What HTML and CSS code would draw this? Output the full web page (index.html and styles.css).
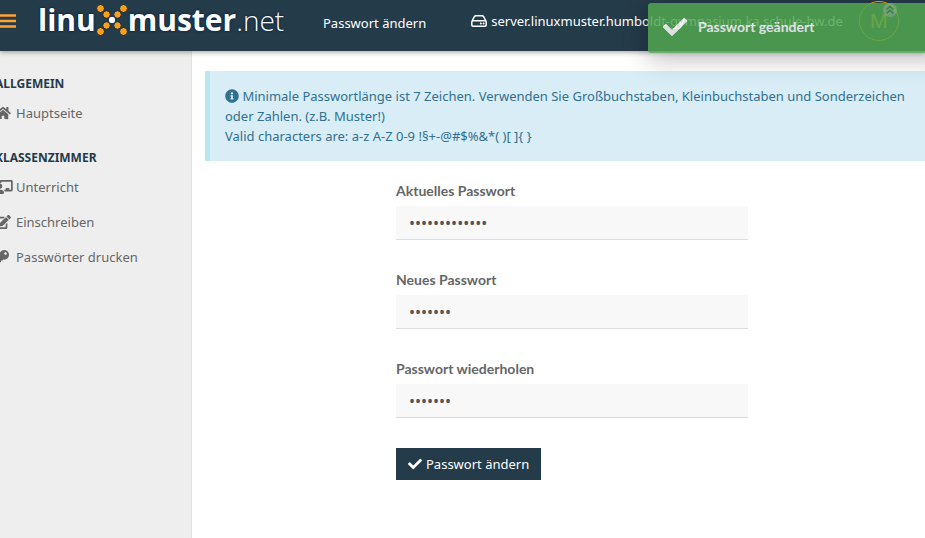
FILE: index.html
```
<!DOCTYPE html>
<html lang="de">
<head>
<meta charset="utf-8">
<title>Passwort ändern</title>
<link rel="stylesheet" href="styles.css">
</head>
<body>
<header class="topbar">
  <button class="menu-toggle" type="button" aria-label="Menü">
    <svg class="bars" viewBox="0 0 16 14"><path d="M0 1.500h16M0 7h16M0 12.500h16" stroke="currentColor" stroke-width="2.500"/></svg>
  </button>
  <a class="brand" href="#">
    <span class="brand-bold">linu</span>
    <svg class="brand-x" viewBox="0 0 32 32">
      <g stroke="#0d2440" stroke-width="1"><g fill="#f9a01b"><circle cx="4.500" cy="4.500" r="4"/><circle cx="10.500" cy="10.500" r="3.800"/><circle cx="21.500" cy="10.500" r="3.800"/><circle cx="27.500" cy="4.500" r="4"/><circle cx="10.500" cy="21.500" r="3.800"/><circle cx="4.500" cy="27.500" r="4"/><circle cx="21.500" cy="21.500" r="3.800"/><circle cx="27.500" cy="27.500" r="4"/></g><circle cx="16" cy="16" r="3.800" fill="#fff"/></g>
    </svg>
    <span class="brand-bold">muster</span><span class="brand-light">.net</span>
  </a>
  <span class="page-name">Passwort ändern</span>
  <span class="server">
    <svg class="hdd" viewBox="0 0 16 12"><path d="M.8 6.500 3.500 1.500Q4 .8 4.800.8h6.400q.8 0 1.300.7l2.700 5M2 5.800h12q1.200 0 1.200 1.200v3q0 1.200-1.200 1.200H2Q.8 11.200.8 10V7Q.8 5.800 2 5.800z" fill="none" stroke="currentColor" stroke-width="1.500"/><circle cx="9.800" cy="8.500" r="1" fill="currentColor"/><circle cx="12.600" cy="8.500" r="1" fill="currentColor"/></svg>
    server.linuxmuster.humboldt-gymnasium.ka.schule-bw.de
  </span>
  <button class="avatar" type="button">M</button>
</header>

<div class="toast" role="status">
  <svg class="toast-check" viewBox="0 0 512 512"><path fill="currentColor" d="M173.898 439.404l-166.400-166.400c-9.997-9.997-9.997-26.206 0-36.204l36.203-36.204c9.997-9.998 26.207-9.998 36.204 0L192 312.690 432.095 72.596c9.997-9.997 26.207-9.997 36.204 0l36.203 36.204c9.997 9.997 9.997 26.206 0 36.204l-294.400 294.401c-9.998 9.997-26.207 9.997-36.204-.001z"/></svg>
  <span>Passwort geändert</span>
  <button class="toast-up" type="button" aria-label="Schließen"><svg viewBox="0 0 14 14"><circle cx="7" cy="7" r="7" fill="#7cb37c"/><path d="M3.500 6.500 7 3.300l3.500 3.200M3.500 10.500 7 7.300l3.500 3.200" fill="none" stroke="#468c48" stroke-width="1.600"/></svg></button>
</div>

<div class="layout">
  <nav class="sidebar">
    <div class="nav">
      <h2>ALLGEMEIN</h2>
      <a href="#"><svg class="wide" viewBox="0 0 576 512"><path d="M280.370 148.260L96 300.110V464a16 16 0 0 0 16 16l112.060-.29a16 16 0 0 0 15.920-16V368a16 16 0 0 1 16-16h64a16 16 0 0 1 16 16v95.640a16 16 0 0 0 16 16.050L464 480a16 16 0 0 0 16-16V300L295.670 148.260a12.190 12.190 0 0 0-15.300 0zM571.600 251.470L488 182.560V44.050a12 12 0 0 0-12-12h-56a12 12 0 0 0-12 12v72.610L318.470 43a48 48 0 0 0-61 0L4.340 251.470a12 12 0 0 0-1.600 16.900l25.500 31A12 12 0 0 0 45.150 301l235.220-193.740a12.190 12.190 0 0 1 15.300 0L530.900 301a12 12 0 0 0 16.900-1.600l25.500-31a12 12 0 0 0-1.700-16.930z"/></svg>Hauptseite</a>
      <h2>KLASSENZIMMER</h2>
      <a href="#"><svg class="wider" viewBox="0 0 640 512"><path d="M208 352c-2.390 0-4.780.35-7.060 1.090C187.980 357.300 174.350 360 160 360c-14.350 0-27.980-2.700-40.950-6.910-2.280-.74-4.660-1.090-7.050-1.090C49.940 352-.33 402.480 0 464.620.14 490.880 21.730 512 48 512h224c26.270 0 47.860-21.120 48-47.380.33-62.140-49.940-112.620-112-112.620zm-48-32c53.020 0 96-42.980 96-96s-42.980-96-96-96-96 42.980-96 96 42.980 96 96 96zM592 0H208c-26.470 0-48 22.250-48 49.590V96c23.420 0 45.100 6.780 64 17.800V64h352v288h-64v-64H384v64h-76.240c19.100 16.690 33.120 38.730 39.690 64H592c26.470 0 48-22.250 48-49.590V49.590C640 22.250 618.470 0 592 0z"/></svg>Unterricht</a>
      <a href="#"><svg class="wide" viewBox="0 0 576 512"><path d="M402.600 83.200l90.200 90.200c3.800 3.800 3.800 10 0 13.800L274.400 405.600l-92.800 10.300c-12.400 1.400-22.900-9.100-21.500-21.500l10.300-92.800L388.800 83.200c3.800-3.800 10-3.800 13.800 0zm162-22.900l-48.800-48.800c-15.200-15.200-39.900-15.200-55.200 0l-35.400 35.400c-3.800 3.800-3.800 10 0 13.800l90.200 90.200c3.800 3.800 10 3.800 13.800 0l35.400-35.400c15.200-15.300 15.200-40 0-55.200zM384 346.200V448H64V128h229.800c3.200 0 6.200-1.300 8.500-3.500l40-40c7.600-7.600 2.200-20.500-8.500-20.500H48C21.500 64 0 85.500 0 112v352c0 26.500 21.500 48 48 48h352c26.500 0 48-21.500 48-48V306.200c0-10.700-12.900-16-20.500-8.500l-40 40c-2.200 2.300-3.500 5.300-3.500 8.500z"/></svg>Einschreiben</a>
      <a href="#"><svg viewBox="0 0 512 512"><path d="M512 176.001C512 273.203 433.202 352 336 352c-11.220 0-22.190-1.062-32.827-3.069l-24.012 27.014A23.999 23.999 0 0 1 261.223 384H224v40c0 13.255-10.745 24-24 24h-40v40c0 13.255-10.745 24-24 24H24c-13.255 0-24-10.745-24-24v-78.059c0-6.365 2.529-12.470 7.029-16.971l161.802-161.802C163.108 213.814 160 195.271 160 176 160 78.798 238.797.001 335.999 0 433.488-.001 512 78.511 512 176.001zM336 128c0 26.510 21.490 48 48 48s48-21.490 48-48-21.490-48-48-48-48 21.490-48 48z"/></svg>Passwörter drucken</a>
    </div>
  </nav>
  <main class="main">
    <div class="content">
      <div class="notice">
        <svg class="info" viewBox="0 0 512 512"><path fill="currentColor" d="M256 8C119.043 8 8 119.083 8 256c0 136.997 111.043 248 248 248s248-111.003 248-248C504 119.083 392.957 8 256 8zm0 110c23.196 0 42 18.804 42 42s-18.804 42-42 42-42-18.804-42-42 18.804-42 42-42zm56 254c0 6.627-5.373 12-12 12h-88c-6.627 0-12-5.373-12-12v-24c0-6.627 5.373-12 12-12h12v-64h-12c-6.627 0-12-5.373-12-12v-24c0-6.627 5.373-12 12-12h64c6.627 0 12 5.373 12 12v100h12c6.627 0 12 5.373 12 12v24z"/></svg>
        Minimale Passwortlänge ist 7 Zeichen. Verwenden Sie Großbuchstaben, Kleinbuchstaben und Sonderzeichen oder Zahlen. (z.B. Muster!)<br>
        Valid characters are: a-z A-Z 0-9 !§+-@#$%&amp;*( )[ ]{ }
      </div>
      <form class="form">
        <div class="field"><label for="current">Aktuelles Passwort</label><input id="current" type="password" value="aaaaaaaaaaaaa"></div>
        <div class="field"><label for="new">Neues Passwort</label><input id="new" type="password" value="aaaaaaa"></div>
        <div class="field"><label for="repeat">Passwort wiederholen</label><input id="repeat" type="password" value="aaaaaaa"></div>
        <button class="submit" type="button"><svg viewBox="0 0 512 512"><path fill="currentColor" d="M173.898 439.404l-166.400-166.400c-9.997-9.997-9.997-26.206 0-36.204l36.203-36.204c9.997-9.998 26.207-9.998 36.204 0L192 312.690 432.095 72.596c9.997-9.997 26.207-9.997 36.204 0l36.203 36.204c9.997 9.997 9.997 26.206 0 36.204l-294.400 294.401c-9.998 9.997-26.207 9.997-36.204-.001z"/></svg>Passwort ändern</button>
      </form>
    </div>
  </main>
</div>
</body>
</html>
```
FILE: styles.css
```
* { box-sizing: border-box; }

body {
  margin: 0;
  min-height: 100vh;
  display: flex;
  flex-direction: column;
  overflow: hidden;
  background: #fff;
  color: #666;
  font: 13px/20px "Noto Sans", sans-serif;
}

button { font: inherit; border: 0; cursor: pointer; }
a { text-decoration: none; }
svg { flex: none; display: block; }

.topbar {
  position: relative;
  z-index: 1;
  display: flex;
  height: 51px;
  padding-bottom: 9px;
  align-items: center;
  background: #243b4a;
  color: #fff;
  white-space: nowrap;
  box-shadow: 0 1px 5px rgba(0, 0, 0, .4);
}

.menu-toggle { padding: 0; background: none; color: #ffa233; }
.bars { width: 16px; height: 14px; }

.brand {
  display: flex;
  align-items: center;
  width: 245px;
  margin-left: 22px;
  padding-bottom: 3px;
  color: #fff;
  font-size: 30px;
  line-height: 42px;
  text-shadow: 0 0 2px #06204a, 0 0 2px #06204a;
}
.brand-bold { font-family: "Open Sans", sans-serif; font-weight: 700; }
.brand-light { font-family: "Open Sans", sans-serif; font-size: 28px; font-weight: 300; }
.brand-x { width: 32px; height: 32px; }

.page-name { margin-left: 40px; padding-top: 4px; }

.server { display: flex; align-items: center; gap: 4px; margin-left: 45px; }
.hdd { width: 16px; height: 12px; }

.avatar {
  width: 40px;
  height: 40px;
  margin-left: 16px;
  padding: 0;
  flex: none;
  border: 1px solid #ffa500;
  border-radius: 50%;
  background: none;
  color: #ffa500;
  font-size: 20px;
}

.toast {
  position: absolute;
  z-index: 2;
  top: 3px;
  left: 648px;
  right: -20px;
  display: flex;
  align-items: center;
  height: 50px;
  padding-left: 15px;
  border-bottom: 2px solid #5aa85d;
  border-radius: 3px;
  background: #51a651;
  color: #fff;
  font-family: Lato, sans-serif;
  font-size: 14px;
  font-weight: 700;
  opacity: .85;
  box-shadow: 0 6px 24px rgba(0, 0, 0, .3);
}
.toast-check { width: 24px; height: 24px; margin-right: 11px; }
.toast-up { position: absolute; top: 0; right: 48px; padding: 0; background: none; }
.toast-up svg { width: 14px; height: 14px; }

.layout { display: flex; flex: 1; }

.sidebar {
  flex: none;
  width: 192px;
  overflow: hidden;
  border-right: 1px solid #e2e2e2;
  background: #eee;
}
.nav { display: flex; flex-direction: column; margin: 23px 0 0 -5px; }
.nav h2 {
  margin: 0 0 1px;
  color: #243b4a;
  font-size: 12px;
  line-height: 20px;
}
.nav a + h2 { margin-top: 18px; }
.nav a {
  display: flex;
  align-items: center;
  height: 35px;
  color: #666;
}
.nav svg { width: 14px; height: 14px; margin-right: 7px; fill: #666; }
.nav .wide { width: 16px; margin-right: 5px; }
.nav .wider { width: 18px; margin-right: 3px; }

.main { flex: 1; min-width: 0; overflow: hidden; }
.content { margin: 20px -14px 0 13px; }

.notice {
  padding: 15px;
  border-left: 5px solid #b9e7f0;
  background: #d9edf7;
  color: #31708f;
}
.info { display: inline-block; width: 14px; height: 14px; vertical-align: -2px; }

.form { width: 352px; margin: 20px auto 0; }
.field { display: flex; flex-direction: column; gap: 5px; margin-bottom: 30px; }
.field label { font-family: Lato, sans-serif; font-size: 14px; font-weight: 700; }
.field input {
  width: 100%;
  height: 34px;
  padding: 6px 13px;
  border: 0;
  border-bottom: 1px solid #ddd;
  border-radius: 0;
  background: #f8f8f8;
  color: #555;
  font: inherit;
  font-size: 16px;
}

.submit {
  display: flex;
  align-items: center;
  gap: 4px;
  height: 32px;
  padding: 0 12px;
  background: #243b4a;
  color: #fff;
}
.submit svg { width: 14px; height: 14px; }
```
